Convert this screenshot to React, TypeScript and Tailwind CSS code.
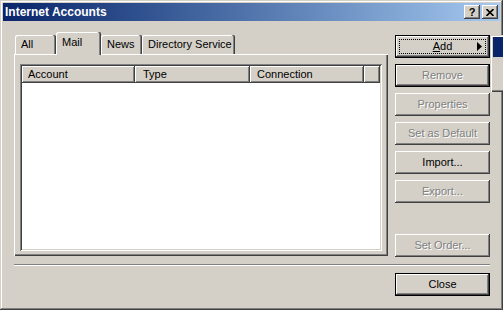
import React from 'react'

const raised =
  'shadow-[inset_-1px_-1px_#404040,inset_1px_1px_#fff,inset_-2px_-2px_#808080,inset_2px_2px_#d4d0c8]'
const disabledText = 'text-[#808080] [text-shadow:1px_1px_0_#fff]'

interface BtnProps {
  label: React.ReactNode
  disabled?: boolean
  def?: boolean
  focus?: boolean
  arrow?: boolean
  className?: string
}

function Btn({ label, disabled, def, focus, arrow, className = '' }: BtnProps) {
  return (
    <div className={`h-[23px] w-[95px] bg-[#d4d0c8] ${def ? 'border border-black' : ''} ${className}`}>
      <div className={`relative h-full w-full flex items-center justify-center ${raised} ${disabled ? disabledText : ''}`}>
        {focus && <div className="absolute inset-[3px] border border-dotted border-black" />}
        <span>{label}</span>
        {arrow && (
          <svg className="absolute right-[7px] top-[6px]" width="5" height="9" viewBox="0 0 5 9">
            <path d="M0 0 L5 4.5 L0 9 Z" fill="#000" />
          </svg>
        )}
      </div>
    </div>
  )
}

const tabs = [
  { name: 'All', w: 'w-[41px]' },
  { name: 'Mail', w: 'w-[45px]', active: true },
  { name: 'News', w: 'w-[41px]' },
  { name: 'Directory Service', w: 'w-[93px]' },
]

const columns = [
  { name: 'Account', w: 'w-[113px]', pl: 'pl-[6px]' },
  { name: 'Type', w: 'w-[115px]', pl: 'pl-[8px]' },
  { name: 'Connection', w: 'w-[114px]', pl: 'pl-[7px]' },
]

export default function App() {
  return (
    <div className="relative w-[503px] h-[310px] bg-[#d4d0c8] p-[3px] flex flex-col text-[11px] text-black font-['Liberation_Sans',Arial,sans-serif] shadow-[inset_-1px_-1px_#404040,inset_1px_1px_#d4d0c8,inset_-2px_-2px_#808080,inset_2px_2px_#fff] overflow-hidden">
      {/* title bar */}
      <div className="h-[18px] flex items-center bg-gradient-to-r from-[#0a246a] to-[#a6caf0] pl-[2px] pr-[2px]">
        <span className="text-white font-bold text-[12px] leading-none">Internet Accounts</span>
        <div className="ml-auto flex gap-[2px]">
          <div className={`w-[16px] h-[14px] bg-[#d4d0c8] flex items-center justify-center ${raised}`}>
            <span className="font-bold text-[11px] leading-none">?</span>
          </div>
          <div className={`w-[16px] h-[14px] bg-[#d4d0c8] flex items-center justify-center ${raised}`}>
            <svg width="8" height="7" viewBox="0 0 8 7">
              <path d="M0.5 0 L7.5 7 M7.5 0 L0.5 7" stroke="#000" strokeWidth="1.6" />
            </svg>
          </div>
        </div>
      </div>

      {/* body */}
      <div className="pl-[11px] pt-[11px] flex flex-col">
        <div className="flex">
          <div className="w-[374px] flex flex-col">
            <div className="h-[22px] flex items-end pl-px">
              {tabs.map(t => (
                <div
                  key={t.name}
                  className={`${t.w} flex items-center pl-[6px] bg-[#d4d0c8] rounded-t-[2px] shadow-[inset_-1px_0_#404040,inset_-2px_0_#808080,inset_1px_1px_#fff] ${t.active ? 'h-[23px] -mb-px relative z-10 pb-[3px]' : 'h-[19px]'}`}
                >
                  {t.name}
                </div>
              ))}
            </div>
            <div className="h-[202px] flex flex-col pt-[10px] pl-[6px] pr-[6px] pb-[5px] shadow-[inset_1px_1px_#fff,inset_-1px_-1px_#404040,inset_-2px_-2px_#808080]">
              <div className="flex-1 bg-white p-[2px] shadow-[inset_1px_1px_#808080,inset_-1px_-1px_#fff,inset_2px_2px_#404040,inset_-2px_-2px_#d4d0c8]">
                <div className="h-[17px] flex bg-[#d4d0c8]">
                  {columns.map(c => (
                    <div key={c.name} className={`${c.w} ${c.pl} flex items-center ${raised}`}>
                      {c.name}
                    </div>
                  ))}
                  <div className={`flex-1 ${raised}`} />
                </div>
              </div>
            </div>
          </div>

          <div className="ml-[7px] pt-[3px] flex flex-col gap-[6px]">
            <Btn label={<><span className="underline">A</span>dd</>} def focus arrow />
            <Btn label="Remove" disabled def />
            <Btn label="Properties" disabled />
            <Btn label="Set as Default" disabled />
            <Btn label="Import..." />
            <Btn label="Export..." disabled />
            <Btn label="Set Order..." disabled className="mt-[25px]" />
          </div>
        </div>

        <div className="mt-[7px] w-[476px] h-[2px] border-t border-[#808080] border-b border-b-white" />

        <div className="mt-[7px] w-[476px] flex justify-end">
          <Btn label="Close" def />
        </div>
      </div>

      {/* popup menu from Add */}
      <div className="absolute left-[490px] top-[35px] w-[13px] h-[57px] bg-[#d4d0c8] shadow-[inset_1px_1px_#d4d0c8,inset_2px_2px_#fff,inset_0_-1px_#404040,inset_0_-2px_#808080]">
        <div className="absolute left-[3px] top-[2px] right-0 h-[20px] bg-[#0a246a]" />
      </div>
    </div>
  )
}
